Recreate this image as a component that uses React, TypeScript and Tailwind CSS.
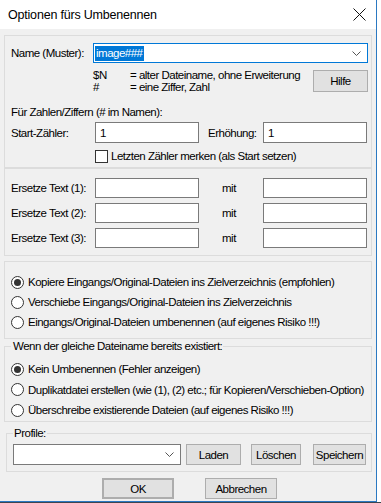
import React from 'react';

const Chevron = () => (
  <svg width="9" height="5" viewBox="0 0 9 5" className="text-[#555]">
    <path d="M0.5 0.5 L4.5 4.5 L8.5 0.5" fill="none" stroke="currentColor" strokeWidth="1" />
  </svg>
);

const TextBox = ({ value = '', className = '' }: { value?: string; className?: string }) => (
  <div className={`bg-white border border-[#7a7a7a] flex items-center px-[4px] ${className}`}>{value}</div>
);

const Radio = ({ checked = false, label }: { checked?: boolean; label: string }) => (
  <div className="flex items-center h-[20px] gap-[4px]">
    <span className="w-[13px] h-[13px] rounded-full border border-[#333] bg-white flex items-center justify-center shrink-0">
      {checked && <span className="w-[7px] h-[7px] rounded-full bg-[#333]" />}
    </span>
    <span>{label}</span>
  </div>
);

const Btn = ({ label, className = '' }: { label: string; className?: string }) => (
  <div className={`bg-[#e1e1e1] border border-[#adadad] flex items-center justify-center ${className}`}>{label}</div>
);

export default function App() {
  return (
    <div className="w-[381px] h-[503px] bg-white font-['Liberation_Sans',Arial,sans-serif] text-[11.5px] leading-[14px] tracking-[-0.5px] text-black whitespace-nowrap overflow-hidden">
      <div className="w-[377px] border-r border-b border-[#2b79c2]">
        {/* title bar */}
        <div className="h-[29px] bg-white flex items-center justify-between pl-[8px] pr-[10px]">
          <span className="text-[12.5px] tracking-[-0.2px]">Optionen fürs Umbenennen</span>
          <svg width="13" height="13" viewBox="0 0 13 13">
            <path d="M0.5 0.5 L12.5 12.5 M12.5 0.5 L0.5 12.5" stroke="#111" strokeWidth="1" />
          </svg>
        </div>

        <div className="bg-[#f0f0f0] px-[4px] pb-[2px] flex flex-col">
          {/* Name group */}
          <div className="mt-[6px] h-[133px] border border-[#dcdcdc] pl-[6px] pr-[3px]">
            <div className="mt-[7px] flex items-center">
              <span className="w-[82px]">Name (Muster):</span>
              <div className="w-[275px] h-[20px] bg-white border border-[#0078d7] flex items-center justify-between pl-[1px] pr-[6px]">
                <span className="bg-[#0078d7] text-white leading-[15px] px-[1px]">image###</span>
                <Chevron />
              </div>
            </div>
            <div className="mt-[6px] flex">
              <div className="w-[82px]" />
              <div className="flex flex-col leading-[12px]">
                <div className="flex"><span className="w-[37px]">$N</span><span>= alter Dateiname, ohne Erweiterung</span></div>
                <div className="flex"><span className="w-[37px]">#</span><span>= eine Ziffer, Zahl</span></div>
              </div>
              <Btn label="Hilfe" className="ml-auto mt-[1px] w-[55px] h-[22px]" />
            </div>
            <div className="mt-[12px]">Für Zahlen/Ziffern (# im Namen):</div>
            <div className="mt-[3px] flex items-center">
              <span className="w-[84px]">Start-Zähler:</span>
              <TextBox value="1" className="w-[104px] h-[21px]" />
              <span className="w-[64px] pl-[9px]">Erhöhung:</span>
              <TextBox value="1" className="w-[104px] h-[21px]" />
            </div>
            <div className="mt-[6px] flex items-center">
              <span className="ml-[84px] w-[13px] h-[13px] border border-[#333] bg-white" />
              <span className="ml-[3px]">Letzten Zähler merken (als Start setzen)</span>
            </div>
          </div>

          {/* Replace group */}
          <div className="h-[88px] border border-[#dcdcdc] pl-[6px] pt-[9px] flex flex-col gap-[5px]">
            {[1, 2, 3].map((n) => (
              <div key={n} className="flex items-center h-[20px]">
                <span className="w-[84px]">Ersetze Text ({n}):</span>
                <TextBox className="w-[104px] h-[20px]" />
                <span className="w-[64px] pl-[23px]">mit</span>
                <TextBox className="w-[104px] h-[20px]" />
              </div>
            ))}
          </div>

          {/* Copy/move group */}
          <div className="mt-[5px] h-[78px] border border-[#dcdcdc] pl-[6px] pt-[10px]">
            <Radio checked label="Kopiere Eingangs/Original-Dateien ins Zielverzeichnis (empfohlen)" />
            <Radio label="Verschiebe Eingangs/Original-Dateien ins Zielverzeichnis" />
            <Radio label="Eingangs/Original-Dateien umbenennen (auf eigenes Risiko !!!)" />
          </div>

          {/* Existing file group */}
          <fieldset className="mt-[1px] border border-[#dcdcdc] pl-[6px] pb-[1px]">
            <legend className="pl-[2px] pr-[1px] leading-[12px]">Wenn der gleiche Dateiname bereits existiert:</legend>
            <div className="mt-[7px] flex flex-col gap-[0.5px]">
              <Radio checked label="Kein Umbenennen (Fehler anzeigen)" />
              <Radio label="Duplikatdatei erstellen (wie (1), (2) etc.; für Kopieren/Verschieben-Option)" />
              <Radio label="Überschreibe existierende Dateien (auf eigenes Risiko !!!)" />
            </div>
          </fieldset>

          {/* Profile group */}
          <fieldset className="mt-[5px] ml-[2px] border border-[#dcdcdc] pl-[6px] pb-[6px]">
            <legend className="pl-[1px] pr-[1px] leading-[12px]">Profile:</legend>
            <div className="mt-[5px] flex items-center">
              <div className="w-[168px] h-[21px] bg-white border border-[#7a7a7a] flex items-center justify-end pr-[6px]">
                <Chevron />
              </div>
              <Btn label="Laden" className="ml-[5px] w-[55px] h-[21px]" />
              <Btn label="Löschen" className="ml-[10px] w-[50px] h-[21px]" />
              <Btn label="Speichern" className="ml-[12px] w-[53px] h-[21px]" />
            </div>
          </fieldset>

          {/* Footer buttons */}
          <div className="mt-[6px] flex">
            <Btn label="OK" className="ml-[98px] w-[72px] h-[21px] border-2 border-[#0078d7]" />
            <Btn label="Abbrechen" className="ml-[31px] w-[72px] h-[21px]" />
          </div>
        </div>
      </div>
      <div className="h-[3px] bg-[#3c4650]" />
    </div>
  );
}
